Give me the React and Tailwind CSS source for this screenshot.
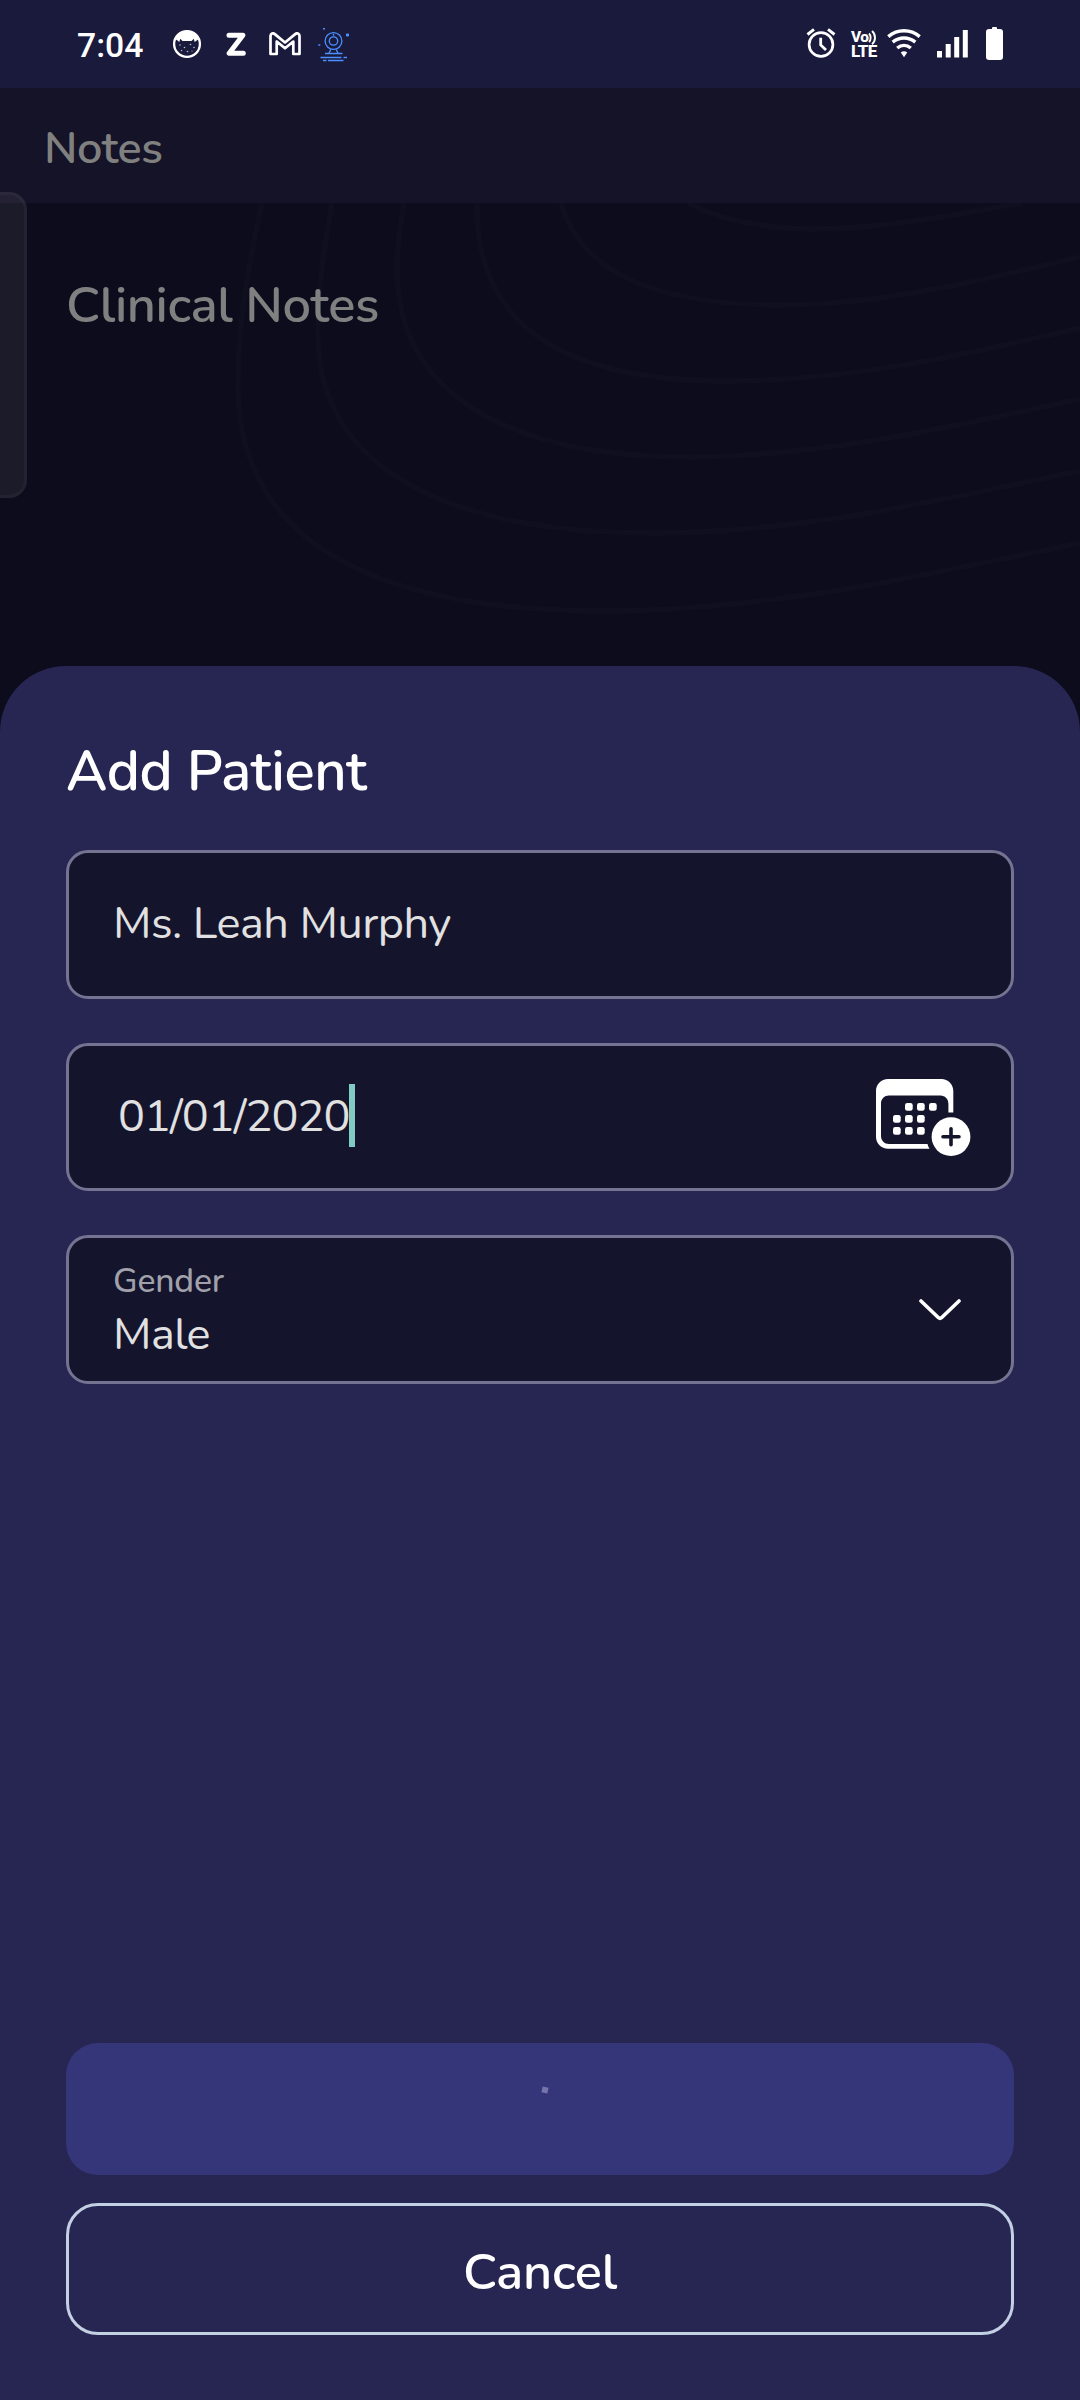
import React from "react";

const CONTOURS = [
  "M262 0C245 77 238 127 238 182C238 337 370 408 605 408C760 408 920 374 1080 340",
  "M332 0C322 57 317 97 318 134C320 262 440 330 654 330C800 330 940 297 1080 268",
  "M404 0C400 22 397 42 397 67C398 192 510 254 688 254C820 254 950 224 1080 196",
  "M477 0C475 127 570 178 726 178C850 178 965 152 1080 125",
  "M561 0C580 67 650 102 781 102C880 102 980 78 1080 54",
  "M688 0C725 19 770 26 815 26C885 26 950 12 1022 0",
];

function CatIcon() {
  return (
    <svg width="30" height="30" viewBox="0 0 30 30">
      <circle cx="15" cy="15" r="12.900" fill="none" stroke="#fff" strokeWidth="2.300" />
      <path d="M3.200 10.500C5.500 4.500 10 1.500 15 1.500s9.500 3 11.800 9C25.500 10.500 24 12 22.600 13L21.800 9.800 19.500 12h-9L8.200 9.800 7.400 13C6 12 5 10.500 3.200 10.500z" fill="#fff" />
      <g fill="#b9b9d0">
        <circle cx="8" cy="16" r=".8" /><circle cx="12.500" cy="18.500" r=".8" />
        <circle cx="18.500" cy="15.500" r=".8" /><circle cx="22" cy="18.500" r=".8" />
        <circle cx="9.500" cy="21.500" r=".7" /><circle cx="15.500" cy="22.500" r=".8" />
        <circle cx="20" cy="22" r=".6" />
      </g>
    </svg>
  );
}

function ZIcon() {
  return (
    <svg width="22" height="26" viewBox="0 0 22 26">
      <path d="M3 3.200H16.900L3.200 21.300H17.300" fill="none" stroke="#fff" strokeWidth="5" strokeLinejoin="round" strokeLinecap="round" />
    </svg>
  );
}

function MailIcon() {
  return (
    <svg width="32" height="25" viewBox="0 0 32 25">
      <path d="M1.500 22V4c0-2.500 2.500-3.400 4.300-1.900L16 10.500 26.200 2.100C28 .6 30.500 1.500 30.500 4v18h-6.200V9.500L16 16.300 7.700 9.500V22z" fill="none" stroke="#fff" strokeWidth="2.700" strokeLinejoin="round" />
    </svg>
  );
}

function WebcamIcon() {
  return (
    <svg width="32" height="34" viewBox="0 0 32 34" fill="none" stroke="#4a90ff" strokeWidth="1.300">
      <circle cx="15.500" cy="13" r="8.400" />
      <circle cx="15.500" cy="13" r="4.200" />
      <path d="M15.500 5.800v2M12.800 21.500l-1.800 3.600M18.200 21.500l1.800 3.600M7 25.500h17.500M2.500 29.500h21M25.500 29.500h3.500M5 32.500h3.500M10 32.500h15.500" />
      <path d="M28 7h3M29.500 5.500v3" strokeWidth="2.200" />
      <path d="M5 .8h2M.3 17h2" strokeWidth="1.600" />
    </svg>
  );
}

function AlarmIcon() {
  return (
    <svg width="30" height="30" viewBox="0 0 30 30" fill="none" stroke="#fff">
      <circle cx="15" cy="16.500" r="11.900" strokeWidth="2.700" />
      <path d="M1.500 6.500L8 1.300M22 1.300l6.500 5.200" strokeWidth="2.900" />
      <path d="M14.700 9.800v7.200l5.300 5" strokeWidth="2.800" />
    </svg>
  );
}

function VolteIcon() {
  return (
    <div className="flex h-[30px] w-[28px] flex-col font-[Roboto,sans-serif] font-extrabold text-white">
      <div className="flex h-[14px] items-start">
        <span className="text-[15.500px] leading-[14px] tracking-[-0.700px]">Vo</span>
        <svg className="shrink-0" width="9" height="15" viewBox="0 0 9 15" fill="none" stroke="#fff" strokeWidth="1.900">
          <path d="M1 3.500c2.200 2 2.200 6.500 0 8.500M4 1c4 3.400 4 10 0 13.200" />
        </svg>
      </div>
      <span className="h-[15px] text-[17px] leading-[15px] tracking-[-0.600px]">LTE</span>
    </div>
  );
}

function WifiIcon() {
  return (
    <svg width="34" height="29" viewBox="0 0 34 29" fill="none" stroke="#fff" strokeWidth="3.500">
      <path d="M1.300 7.600C10.500-.1 23.500-.1 32.700 7.600" />
      <path d="M5.700 13.200c6.700-5.500 15.900-5.500 22.600 0" />
      <path d="M10.200 19c4.200-3.400 9.400-3.400 13.600 0" />
      <path d="M13.800 23.600c2-1.700 4.400-1.700 6.400 0L17 28.200z" fill="#fff" stroke="none" />
    </svg>
  );
}

function SignalIcon() {
  return (
    <svg width="31" height="28" viewBox="0 0 31 28" fill="#fff">
      <rect x="0" y="21" width="5" height="6.500" />
      <rect x="8.700" y="14" width="5" height="13.500" />
      <rect x="17.200" y="7" width="5" height="20.500" />
      <rect x="25.800" y="0" width="5" height="27.500" />
    </svg>
  );
}

function BatteryIcon() {
  return (
    <svg width="17" height="33" viewBox="0 0 17 33" fill="#fff">
      <rect x="6" y="0" width="5" height="4" rx="1" />
      <rect x="0" y="2" width="17" height="31" rx="3" />
    </svg>
  );
}

const DOTS = [
  [33, 28], [45, 28], [57, 28],
  [21, 40], [33, 40], [45, 40],
  [21, 52], [33, 52], [45, 52],
];

function CalendarAddIcon() {
  return (
    <svg className="shrink-0" width="95" height="78" viewBox="0 0 95 78">
      <path
        fill="#fff"
        fillRule="evenodd"
        d="M12 0H65.500C72 0 77.300 5 77.300 12V33.500H72.400V25C72.400 20 69 16.500 64.500 16.500H13C8.500 16.500 5 20 5 24.500V57C5 61.500 8.500 65 13 65H51.500C51.900 66.700 52.600 68.300 53.500 69.700H12C5.300 69.700 0 64.500 0 58V12C0 5 5.300 0 12 0Z"
      />
      {DOTS.map(([x, y]) => (
        <rect key={`${x}-${y}`} x={x - 4} y={y - 4} width="7.700" height="7.700" rx="2.300" fill="#fff" />
      ))}
      <circle cx="75" cy="57.700" r="19.400" fill="#fff" />
      <path d="M67 57.700h16M75 49.700v16" stroke="#14142d" strokeWidth="3.600" strokeLinecap="round" />
    </svg>
  );
}

function Field({ className, children }) {
  return (
    <div className={`flex rounded-[22px] border-[3px] border-[#747391] bg-[#14142d] pl-11 text-[45px] text-[#e2e1e1] ${className}`}>
      {children}
    </div>
  );
}

export default function App() {
  return (
    <div className="flex h-[2400px] w-[1080px] flex-col overflow-hidden bg-[#0d0c1c] font-[Nunito,Lato,sans-serif]">
      <header className="flex h-[88px] shrink-0 items-start bg-[#1a1a3d]">
        <div className="mt-[26px] ml-[77px] w-[95px] font-[Roboto,sans-serif] text-[33.700px] leading-10 font-medium text-white">7:04</div>
        <div className="mt-[29px] w-[54px]"><CatIcon /></div>
        <div className="mt-[32px] w-[43px]"><ZIcon /></div>
        <div className="mt-[32px] w-[49px]"><MailIcon /></div>
        <div className="mt-[28px]"><WebcamIcon /></div>
        <div className="mt-[28px] ml-auto w-[45px]"><AlarmIcon /></div>
        <div className="mt-[30px] w-[36px]"><VolteIcon /></div>
        <div className="mt-[29px] w-[50px]"><WifiIcon /></div>
        <div className="mt-[30px] w-[49px]"><SignalIcon /></div>
        <div className="mt-[27px] mr-[77px]"><BatteryIcon /></div>
      </header>

      <div className="h-[115px] shrink-0 bg-[#151327] pt-[30px] pl-11 text-[45px] leading-[62px] font-semibold tracking-[-0.450px] text-[#808080]">Notes</div>

      <main className="relative h-[463px] shrink-0 pt-[68px] pl-[66px]">
        <svg className="absolute top-0 left-0" width="1080" height="463" fill="none" stroke="#100f1f" strokeWidth="5.500">
          {CONTOURS.map((d) => <path key={d} d={d} />)}
        </svg>
        <h1 className="relative text-[50.600px] leading-[70px] font-semibold tracking-[-0.400px] text-[#808080]">Clinical Notes</h1>
        <div className="absolute -top-[11px] left-0 h-[306px] w-[27px] rounded-r-[18px] border-3 border-l-0 border-white/3 bg-[#9999991c]" />
      </main>

      <section className="flex flex-1 flex-col rounded-t-[66px] bg-[#272552] px-[66px] pt-[68px] pb-[65px]">
        <h2 className="text-[56.250px] leading-[76px] font-semibold tracking-[-0.450px] text-white">Add Patient</h2>

        <Field className="mt-10 h-[149px] items-center">
          <span className="-mt-0.5 tracking-[-0.500px]">Ms. Leah Murphy</span>
        </Field>

        <Field className="mt-11 h-[148px] items-center pr-10">
          <span className="ml-[5px] tracking-[-1px]">01/01/2020</span>
          <span className="-mt-[3px] h-[63px] w-1.5 bg-[#80cbc4]" />
          <span className="mt-0.5 ml-auto"><CalendarAddIcon /></span>
        </Field>

        <Field className="mt-11 h-[149px] items-center justify-between pr-[50px]">
          <div className="flex flex-col pt-[5px]">
            <span className="text-[33.750px] leading-[45px] font-medium tracking-[-0.200px] text-[#a1a1ab]">Gender</span>
            <span className="leading-[62px] tracking-[-0.600px]">Male</span>
          </div>
          <svg width="42" height="22" viewBox="0 0 42 22" fill="none" stroke="#fff" strokeWidth="3.600" strokeLinecap="round" strokeLinejoin="round">
            <path d="M2 2L19.500 18.700Q21 20 22.500 18.700L40 2" />
          </svg>
        </Field>

        <button className="mt-auto flex h-[132px] justify-center rounded-[32px] bg-[#35357a]" aria-label="Saving">
          <span className="mt-11 ml-2.5 size-1.5 rotate-12 bg-[#7674ab]" />
        </button>
        <button className="mt-7 flex h-[132px] items-center justify-center rounded-[32px] border-[3px] border-[#c3d0e4] text-[50.600px] leading-[70px] font-semibold text-white">
          <span className="mt-[7px] tracking-[-0.200px]">Cancel</span>
        </button>
      </section>
    </div>
  );
}
